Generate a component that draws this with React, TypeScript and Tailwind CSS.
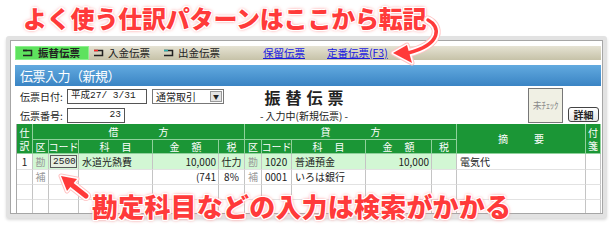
import React from "react";

const glow =
  "[text-shadow:1px_0_0_#fff,-1px_0_0_#fff,0_1px_0_#fff,0_-1px_0_#fff,1px_1px_0_#fff,-1px_-1px_0_#fff,1px_-1px_0_#fff,-1px_1px_0_#fff,0_0_3px_#ff8c8c,0_0_4px_#ff9c9c]";

const TabIcon = ({ color }: { color: string }) => (
  <svg width="11" height="8" viewBox="0 0 11 8" className="shrink-0">
    <path d="M1 1.5H9.5V6.5H1" fill="none" stroke="#222" strokeWidth="1.5" />
    <path d="M1 1.5H5" fill="none" stroke={color} strokeWidth="1.5" />
  </svg>
);

const hd =
  "flex items-center justify-center text-white border-r border-b border-[#8fd19c]";
const cell = "border-r border-b border-r-[#c4c4c4] border-b-[#e2e2e2] flex items-center";
const green = "bg-[#d2f7d4]";

export default function App() {
  return (
    <div className="w-[613px] h-[233px] bg-white relative overflow-hidden font-['Noto_Sans_CJK_JP','Noto_Sans',sans-serif] text-[#222]">
      <div
        className={`h-[36px] pl-[23px] pt-[3px] text-[24px] leading-[30px] font-black tracking-[-0.2px] text-[#ff3a3a] ${glow}`}
      >
        よく使う仕訳パターンはここから転記
      </div>

      <div className="ml-[6px] w-[601px] h-[182px] bg-[#e2e2e2] rounded-[3px] p-[4px] shadow-[0_2px_3px_rgba(0,0,0,0.15)]">
        <div className="h-full border border-[#a6a6a6] bg-white pl-[4px] pr-[1px] pt-[5px] flex flex-col overflow-hidden">
          {/* tab bar */}
          <div className="h-[14px] flex items-stretch bg-gradient-to-b from-[#e6e3d4] to-[#c6c2a8] text-[10.5px] leading-none shrink-0">
            <div className="w-[74px] bg-[#5ee25e] border border-[#8cf08c] flex items-center pl-[6px] gap-[5px] font-bold">
              <TabIcon color="#222" />
              <span>振替伝票</span>
            </div>
            <div className="w-[70px] flex items-center pl-[4px] gap-[4px]">
              <TabIcon color="#ff2a2a" />
              <span>入金伝票</span>
            </div>
            <div className="w-[70px] flex items-center pl-[4px] gap-[4px]">
              <TabIcon color="#2ab0b0" />
              <span>出金伝票</span>
            </div>
            <div className="flex items-center ml-[34px] text-[#1a1ae0] underline">保留伝票</div>
            <div className="flex items-center ml-[22px] text-[#1a1ae0] underline">定番伝票(F3)</div>
          </div>

          {/* title bar */}
          <div className="mt-[5px] h-[21px] shrink-0 bg-gradient-to-b from-[#62aadf] to-[#3a84c4] text-white text-[13px] flex items-center pl-[5px] tracking-[-0.5px]">
            伝票入力（新規）
          </div>

          {/* form */}
          <div className="h-[38px] shrink-0 flex text-[10px]">
            <div className="w-[219px] pl-[5px] pt-[3px] flex flex-col gap-[4px]">
              <div className="flex items-center h-[15px]">
                <span className="w-[47px]">伝票日付:</span>
                <div className="w-[80px] h-[15px] border border-[#555] flex items-center pl-[3px] font-['Liberation_Mono','Noto_Sans_CJK_JP',monospace] text-[9.5px]">
                  平成27/ 3/31
                </div>
                <div className="ml-[5px] w-[72px] h-[15px] border border-[#777] flex items-center">
                  <span className="pl-[3px] flex-1">通常取引</span>
                  <span className="w-[12px] h-[11px] mr-[1px] bg-[#e4e4e4] border border-[#999] flex items-center justify-center text-[6px]">
                    ▼
                  </span>
                </div>
              </div>
              <div className="flex items-center h-[15px]">
                <span className="w-[47px]">伝票番号:</span>
                <div className="w-[58px] h-[15px] border border-[#555] flex items-center justify-end pr-[3px] font-['Liberation_Mono',monospace] text-[9.5px]">
                  23
                </div>
              </div>
            </div>
            <div className="w-[140px] flex flex-col items-center pt-[1px]">
              <div className="text-[16px] font-bold leading-[21px] tracking-[5px] pl-[5px]">振替伝票</div>
              <div className="mt-[1px] text-[10px] leading-[14.5px]">- 入力中(新規伝票) -</div>
            </div>
            <div className="ml-auto pr-[2px] flex items-start gap-[5px]">
              <div className="mt-[2px] w-[35px] h-[35px] bg-[#f0f0e4] border border-[#777] flex items-center justify-center text-[9px] text-[#8a8a8a] tracking-[-0.3px]">
                未ﾁｪｯｸ
              </div>
              <div className="mt-[21px] w-[31px] h-[15px] rounded-[3px] border border-[#444] bg-gradient-to-b from-white to-[#e6e6e6] flex items-center justify-center text-[10px] font-bold">
                詳細
              </div>
            </div>
          </div>

          {/* journal table */}
          <div className="ml-[1px] grid grid-cols-[16px_16px_30px_74px_66px_26px_17px_30px_74px_66px_25px_129px_15px] grid-rows-[16px_14px_16px_15px_15px_15px] border-l border-[#a8a8a8] text-[10px] leading-none">
            <div className={`${hd} row-span-2 bg-[#1b9636] whitespace-pre-line text-center leading-[13px]`}>
              {"仕\n訳"}
            </div>
            <div className={`${hd} col-span-5 bg-[#1b9636] tracking-[40px] pl-[40px]`}>借方</div>
            <div className={`${hd} col-span-5 bg-[#1b9636] tracking-[40px] pl-[40px]`}>貸方</div>
            <div className={`${hd} row-span-2 bg-[#1b9636] tracking-[26px] pl-[26px]`}>摘要</div>
            <div className={`${hd} row-span-2 bg-[#1b9636] whitespace-pre-line text-center leading-[13px]`}>
              {"付\n箋"}
            </div>

            {["区", "コード", "科　 目", "金　 額", "税", "区", "コード", "科　 目", "金　 額", "税"].map(
              (t, i) => (
                <div key={i} className={`${hd} bg-[#1b9636] whitespace-pre`}>
                  {t}
                </div>
              )
            )}

            {/* row 1 */}
            <div className={`${cell} justify-center`}>1</div>
            <div className={`${cell} ${green} justify-center text-[#999]`}>勘</div>
            <div className={`${cell} ${green} p-[1px]`}>
              <div className="w-full h-full border border-[#5a5a5a] bg-[#e6efe2] flex items-center pl-[2px] font-['Liberation_Mono',monospace] text-[9.5px]">
                2500
              </div>
            </div>
            <div className={`${cell} ${green} pl-[3px]`}>水道光熱費</div>
            <div className={`${cell} ${green} justify-end pr-[2px]`}>10,000</div>
            <div className={`${cell} ${green} justify-center`}>仕力</div>
            <div className={`${cell} ${green} justify-center text-[#999]`}>勘</div>
            <div className={`${cell} ${green} pl-[3px]`}>1020</div>
            <div className={`${cell} ${green} pl-[3px]`}>普通預金</div>
            <div className={`${cell} ${green} justify-end pr-[2px]`}>10,000</div>
            <div className={`${cell} ${green}`} />
            <div className={`${cell} pl-[3px]`}>電気代</div>
            <div className={cell} />

            {/* row 2 */}
            <div className={cell} />
            <div className={`${cell} justify-center text-[#999]`}>補</div>
            <div className={cell} />
            <div className={cell} />
            <div className={`${cell} justify-end pr-[2px]`}>(741</div>
            <div className={`${cell} justify-center`}>8%</div>
            <div className={`${cell} justify-center text-[#999]`}>補</div>
            <div className={`${cell} pl-[3px]`}>0001</div>
            <div className={`${cell} pl-[3px]`}>いろは銀行</div>
            <div className={cell} />
            <div className={cell} />
            <div className={cell} />
            <div className={cell} />

            {/* empty rows */}
            {Array.from({ length: 26 }).map((_, i) => (
              <div key={i} className={cell} />
            ))}
          </div>
        </div>
      </div>

      {/* annotation arrows */}
      <svg className="absolute inset-0 pointer-events-none" width="613" height="233" viewBox="0 0 613 233">
        <g fill="none" strokeLinecap="round" strokeLinejoin="round">
          <path d="M428 20 C440 26 443 44 408 53" stroke="#ffc4c4" strokeWidth="9" />
          <polygon points="393,53 407,45 412,63" stroke="#ffc4c4" strokeWidth="5" fill="#ffc4c4" />
          <path d="M428 20 C440 26 443 44 408 53" stroke="#fff" strokeWidth="7" />
          <polygon points="393,53 407,45 412,63" stroke="#fff" strokeWidth="3" fill="#fff" />
          <path d="M428 20 C440 26 443 44 408 53" stroke="#ff3a3a" strokeWidth="3.5" />
          <polygon points="393,53 407,45 412,63" fill="#ff3a3a" />

          <path d="M72 185 L86 196" stroke="#ffc4c4" strokeWidth="10" />
          <polygon points="61,176 77,179 67,191" stroke="#ffc4c4" strokeWidth="5" fill="#ffc4c4" />
          <path d="M72 185 L86 196" stroke="#fff" strokeWidth="8" />
          <polygon points="61,176 77,179 67,191" stroke="#fff" strokeWidth="3" fill="#fff" />
          <path d="M72 185 L86 196" stroke="#ff3a3a" strokeWidth="5" />
          <polygon points="61,176 77,179 67,191" fill="#ff3a3a" />
        </g>
      </svg>

      <div
        className={`absolute left-[92px] top-[191px] text-[26px] leading-[30px] font-black tracking-[0.2px] text-[#ff3a3a] whitespace-nowrap ${glow}`}
      >
        勘定科目などの入力は検索がかかる
      </div>
    </div>
  );
}
